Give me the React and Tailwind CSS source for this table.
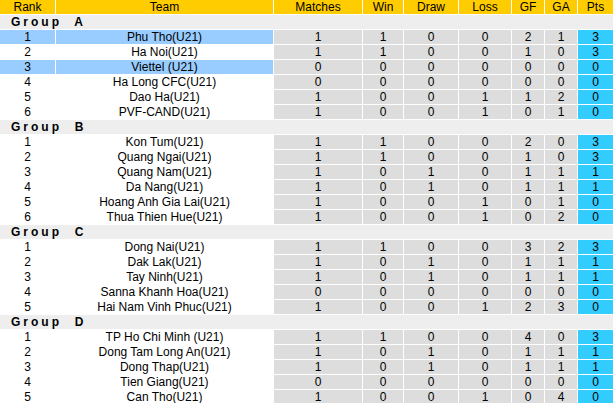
import React from 'react';

const groups = [
  {
    name: 'A',
    rows: [
      [1, 'Phu Tho(U21)', 1, 1, 0, 0, 2, 1, 3, true],
      [2, 'Ha Noi(U21)', 1, 1, 0, 0, 1, 0, 3],
      [3, 'Viettel (U21)', 0, 0, 0, 0, 0, 0, 0, true],
      [4, 'Ha Long CFC(U21)', 0, 0, 0, 0, 0, 0, 0],
      [5, 'Dao Ha(U21)', 1, 0, 0, 1, 1, 2, 0],
      [6, 'PVF-CAND(U21)', 1, 0, 0, 1, 0, 1, 0],
    ],
  },
  {
    name: 'B',
    rows: [
      [1, 'Kon Tum(U21)', 1, 1, 0, 0, 2, 0, 3],
      [2, 'Quang Ngai(U21)', 1, 1, 0, 0, 1, 0, 3],
      [3, 'Quang Nam(U21)', 1, 0, 1, 0, 1, 1, 1],
      [4, 'Da Nang(U21)', 1, 0, 1, 0, 1, 1, 1],
      [5, 'Hoang Anh Gia Lai(U21)', 1, 0, 0, 1, 0, 1, 0],
      [6, 'Thua Thien Hue(U21)', 1, 0, 0, 1, 0, 2, 0],
    ],
  },
  {
    name: 'C',
    rows: [
      [1, 'Dong Nai(U21)', 1, 1, 0, 0, 3, 2, 3],
      [2, 'Dak Lak(U21)', 1, 0, 1, 0, 1, 1, 1],
      [3, 'Tay Ninh(U21)', 1, 0, 1, 0, 1, 1, 1],
      [4, 'Sanna Khanh Hoa(U21)', 0, 0, 0, 0, 0, 0, 0],
      [5, 'Hai Nam Vinh Phuc(U21)', 1, 0, 0, 1, 2, 3, 0],
    ],
  },
  {
    name: 'D',
    rows: [
      [1, 'TP Ho Chi Minh (U21)', 1, 1, 0, 0, 4, 0, 3],
      [2, 'Dong Tam Long An(U21)', 1, 0, 1, 0, 1, 1, 1],
      [3, 'Dong Thap(U21)', 1, 0, 1, 0, 1, 1, 1],
      [4, 'Tien Giang(U21)', 0, 0, 0, 0, 0, 0, 0],
      [5, 'Can Tho(U21)', 1, 0, 0, 1, 0, 4, 0],
    ],
  },
];

const heads = ['Rank', 'Team', 'Matches', 'Win', 'Draw', 'Loss', 'GF', 'GA', 'Pts'];

export default function App() {
  return (
    <div
      className="w-[613px] h-[403px] overflow-hidden bg-white text-[12px] leading-[14px] text-black"
      style={{ fontFamily: '"Liberation Sans", Arial, sans-serif' }}
    >
      <div className="grid grid-cols-[55px_217px_88px_40px_54px_52px_32px_32px_35px] gap-px">
        {heads.map(h => (
          <div key={h} className="h-[14px] bg-[#ffcc00] text-center">{h}</div>
        ))}
        {groups.map(g => (
          <React.Fragment key={g.name}>
            <div className="col-span-9 h-[14px] bg-[#eeeeee] pl-[11px] font-bold tracking-[3px] whitespace-pre">
              {'Group  ' + g.name}
            </div>
            {g.rows.map(r => {
              const hl = r[9];
              const side = hl ? 'bg-[#99ccff]' : 'bg-white';
              return (
                <React.Fragment key={r[1]}>
                  <div className={`h-[14px] text-center ${side}`}>{r[0]}</div>
                  <div className={`h-[14px] text-center ${side}`}>{r[1]}</div>
                  {r.slice(2, 8).map((v, i) => (
                    <div key={i} className="h-[14px] text-center bg-[#dddddd]">{v}</div>
                  ))}
                  <div className="h-[14px] text-center bg-[#33ccff]">{r[8]}</div>
                </React.Fragment>
              );
            })}
          </React.Fragment>
        ))}
      </div>
    </div>
  );
}
